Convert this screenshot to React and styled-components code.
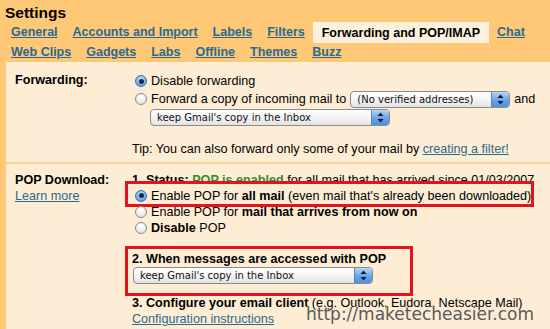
import React from "react";
import styled, { createGlobalStyle } from "styled-components";

const Global = createGlobalStyle`
  html, body { margin: 0; padding: 0; }
  body {
    background: #ffc877;
    font-family: "Liberation Sans", Arial, sans-serif;
    font-size: 12.6px;
    color: #000;
    width: 550px;
    height: 329px;
    overflow: hidden;
  }
`;

const Page = styled.div`
  position: relative;
  width: 550px;
  height: 329px;
  overflow: hidden;
`;

const Header = styled.div`
  padding: 3px 0 0 5px;
  height: 62px;
  box-sizing: border-box;
`;

const Title = styled.h1`
  margin: 0;
  font-size: 15.5px;
  font-weight: bold;
  line-height: 19px;
`;

const TabRow = styled.div`
  display: flex;
  align-items: center;
  gap: 15px;
  padding-left: 6px;
  height: 20px;
`;

const Tab = styled.a`
  font-weight: bold;
  font-size: 12.5px;
  color: #2a6a8e;
  text-decoration: underline;
  white-space: nowrap;
`;

const ActiveTab = styled.span`
  font-weight: bold;
  font-size: 12.5px;
  background: #fdf0dc;
  padding: 4px 9px 3px;
  margin: 0 -7px;
  white-space: nowrap;
`;

const Panel = styled.div`
  margin-left: 6px;
  background: #fdedd5;
  height: 267px;
`;

const Section = styled.div`
  display: grid;
  grid-template-columns: 126px 1fr;
  padding: ${(p) => p.$pad};
  border-bottom: ${(p) => (p.$sep ? "2px solid #fbd49a" : "none")};
`;

const Label = styled.div`
  padding-left: 9px;
  display: flex;
  flex-direction: column;
`;

const LabelText = styled.span`
  font-weight: bold;
  line-height: 16px;
  height: 16px;
  display: flex;
  align-items: center;
`;

const Link = styled.a`
  color: #2a6a8e;
  text-decoration: underline;
  line-height: 16px;
`;

const Content = styled.div`
  display: flex;
  flex-direction: column;
`;

const Row = styled.div`
  display: flex;
  align-items: center;
  white-space: nowrap;
  height: ${(p) => p.$h || 17}px;
  padding-left: ${(p) => p.$indent || 0}px;
  margin-top: ${(p) => p.$mt || 0}px;
  position: relative;
`;

const RadioCircle = styled.span`
  width: 12px;
  height: 12px;
  border-radius: 50%;
  border: 1px solid #8a8a8a;
  background: radial-gradient(circle at 50% 30%, #ffffff 0%, #e4e4e4 80%);
  box-sizing: border-box;
  display: inline-flex;
  align-items: center;
  justify-content: center;
  margin: 0 4px 0 3px;
  flex: none;
  ${(p) =>
    p.$on &&
    `border-color: #3a6fb0;
     background: radial-gradient(circle at 50% 35%, #cfe4fb 0%, #6aa6e8 70%, #3b7fd0 100%);`}
`;

const Dot = styled.span`
  width: 5px;
  height: 5px;
  border-radius: 50%;
  background: #0e2a55;
`;

const B = styled.b`
  font-weight: bold;
`;

const Green = styled.span`
  color: #2f8f2f;
  font-weight: bold;
`;

const SelectBox = styled.div`
  display: inline-flex;
  align-items: center;
  width: ${(p) => p.$w}px;
  height: 17px;
  border: 1px solid #8c8c8c;
  border-radius: 4px;
  background: linear-gradient(#ffffff 0%, #f4f4f4 50%, #e2e2e2 100%);
  box-sizing: border-box;
  overflow: hidden;
  margin: ${(p) => p.$m || "0"};
  flex: none;
`;

const SelectText = styled.span`
  flex: 1;
  font-family: "DejaVu Sans", Verdana, sans-serif;
  font-size: 10px;
  padding-left: 6px;
  color: #111;
  white-space: nowrap;
`;

const Arrows = styled.span`
  width: 17px;
  height: 100%;
  background: linear-gradient(#b9d6f7 0%, #6ea6e6 50%, #4f8fe0 100%);
  border-left: 1px solid #5a86c0;
  display: flex;
  align-items: center;
  justify-content: center;
`;

const Highlight = styled.div`
  position: absolute;
  border: 3px solid #e4141e;
  pointer-events: none;
  left: ${(p) => p.$l}px;
  top: ${(p) => p.$t}px;
  width: ${(p) => p.$w}px;
  height: ${(p) => p.$h}px;
  box-sizing: border-box;
`;

const Watermark = styled.div`
  position: absolute;
  left: 306px;
  top: 304px;
  font-family: "DejaVu Sans", Verdana, sans-serif;
  font-size: 17px;
  line-height: 20px;
  color: #5a5a5a;
  text-shadow: 0 0 2px #fdedd5, 0 0 1px #fdedd5;
`;

function Radio({ on }) {
  return <RadioCircle $on={on}>{on && <Dot />}</RadioCircle>;
}

function Select({ w, children, m }) {
  return (
    <SelectBox $w={w} $m={m}>
      <SelectText>{children}</SelectText>
      <Arrows>
        <svg width="7" height="11" viewBox="0 0 7 11">
          <path d="M3.5 0.5 L6.5 4 L0.5 4 Z" fill="#0b1d3a" />
          <path d="M3.5 10.5 L6.5 7 L0.5 7 Z" fill="#0b1d3a" />
        </svg>
      </Arrows>
    </SelectBox>
  );
}

export default function App() {
  return (
    <Page>
      <Global />
      <Header>
        <Title>Settings</Title>
        <TabRow>
          <Tab>General</Tab>
          <Tab>Accounts and Import</Tab>
          <Tab>Labels</Tab>
          <Tab>Filters</Tab>
          <ActiveTab>Forwarding and POP/IMAP</ActiveTab>
          <Tab>Chat</Tab>
        </TabRow>
        <TabRow>
          <Tab>Web Clips</Tab>
          <Tab>Gadgets</Tab>
          <Tab>Labs</Tab>
          <Tab>Offline</Tab>
          <Tab>Themes</Tab>
          <Tab>Buzz</Tab>
        </TabRow>
      </Header>
      <Panel>
        <Section $sep $pad="10px 0 5px">
          <Label>
            <LabelText>Forwarding:</LabelText>
          </Label>
          <Content>
            <Row $h={18}>
              <Radio on />
              Disable forwarding
            </Row>
            <Row $h={18}>
              <Radio />
              Forward a copy of incoming mail to
              <Select w={160} m="0 4px 0 4px">(No verified addresses)</Select>
              and
            </Row>
            <Row $h={18} $indent={18}>
              <Select w={240}>keep Gmail's copy in the Inbox</Select>
            </Row>
            <Row $mt={14}>
              Tip: You can also forward only some of your mail by&nbsp;
              <Link>creating a filter!</Link>
            </Row>
          </Content>
        </Section>
        <Section $pad="8px 0 0">
          <Label>
            <LabelText>POP Download:</LabelText>
            <Link>Learn more</Link>
          </Label>
          <Content>
            <Row $h={16}>
              <B>1. Status:&nbsp;</B>
              <Green>POP is enabled</Green>&nbsp;for all mail that has arrived since 01/03/2007
            </Row>
            <Row $h={15}>
              <Radio on />
              Enable POP for&nbsp;<B>all mail</B>&nbsp;(even mail that's already been downloaded)
              <Highlight $l={-7} $t={-7} $w={409} $h={26} />
            </Row>
            <Row $h={17}>
              <Radio />
              Enable POP for&nbsp;<B>mail that arrives from now on</B>
            </Row>
            <Row $h={16}>
              <Radio />
              <B>Disable</B>&nbsp;POP
            </Row>
            <Row $h={17} $mt={14}>
              <B>2. When messages are accessed with POP</B>
              <Highlight $l={-7} $t={-4} $w={288} $h={50} />
            </Row>
            <Row $h={17} $indent={1}>
              <Select w={240}>keep Gmail's copy in the Inbox</Select>
            </Row>
            <Row $h={17} $mt={10}>
              <B>3. Configure your email client</B>&nbsp;(e.g. Outlook, Eudora, Netscape Mail)
            </Row>
            <Row $h={16}>
              <Link>Configuration instructions</Link>
            </Row>
          </Content>
        </Section>
      </Panel>
      <Watermark>http://maketecheasier.com</Watermark>
    </Page>
  );
}
